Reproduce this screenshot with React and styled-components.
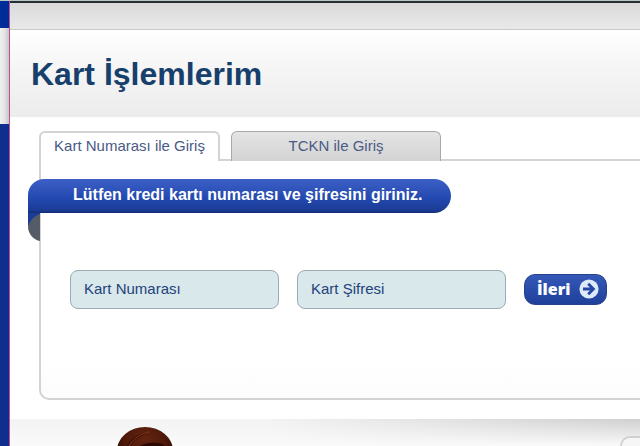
import React, { useState } from 'react';
import styled, { createGlobalStyle } from 'styled-components';

const colors = {
  Navy: '#173f6b',
  Text: '#4a5a86',
  Field: '#d9e8eb',
  Line: '#d3d3d3',
  Blue: '#102f8c',
};

const tabs = [
  { id: 'card', label: 'Kart Numarası ile Giriş', width: 181 },
  { id: 'tckn', label: 'TCKN ile Giriş', width: 210 },
];

const RibbonFold = () => (
  <Fold viewBox="0 0 12 28" aria-hidden="true">
    <path d="M0 0H12V3C6 4 2 8 0 15Z" fill="#1b3c95" />
    <path d="M12 1C6 3 1 8 0 15C1 22 6 27 12 28Z" fill="#565b68" />
  </Fold>
);

const ArrowIcon = () => (
  <svg width="20" height="20" viewBox="0 0 20 20" aria-hidden="true">
    <circle cx="10" cy="10" r="9.6" fill="#dceafa" />
    <path
      d="M4 10H14M9.2 4.8L14.4 10L9.2 15.2"
      fill="none"
      stroke="#2447a3"
      strokeWidth="2.8"
    />
  </svg>
);

const CoffeeBean = () => (
  <Bean viewBox="0 0 58 36" aria-hidden="true">
    <defs>
      <radialGradient id="bean" cx="0.5" cy="0.25" r="0.6">
        <stop offset="0" stopColor="#64240f" />
        <stop offset="0.6" stopColor="#4f190a" />
        <stop offset="1" stopColor="#2a0a05" />
      </radialGradient>
    </defs>
    <ellipse cx="29" cy="24" rx="28" ry="24" fill="url(#bean)" />
    <path d="M10 20C14 12 22 6 34 5C24 9 17 14 13 20Z" fill="#3a1007" />
    <path d="M13 19C17 12 24 7 33 5" fill="none" stroke="#86391f" />
    <path d="M24 19C30 15 38 15 47 17L50 22H22Z" fill="#2b0a05" />
  </Bean>
);

const App = () => {
  const [active, setActive] = useState('card');

  return (
    <>
      <GlobalStyle />
      <Page>
        <TopLine />
        <Columns>
          <Sidebar>
            <SidebarTop />
            <SidebarGap />
          </Sidebar>
          <Main>
            <TopBar />
            <Header>
              <Title>Kart İşlemlerim</Title>
            </Header>
            <Content>
              <Tabs role="tablist">
                {tabs.map(({ id, label, width }) => (
                  <Tab
                    key={id}
                    type="button"
                    role="tab"
                    aria-selected={active === id}
                    $active={active === id}
                    $width={width}
                    onClick={() => setActive(id)}
                  >
                    {label}
                  </Tab>
                ))}
              </Tabs>
              <Panel>
                <Ribbon>
                  Lütfen kredi kartı numarası ve şifresini giriniz.
                  <RibbonFold />
                </Ribbon>
                <Form onSubmit={evt => evt.preventDefault()}>
                  <Field
                    type="text"
                    placeholder="Kart Numarası"
                    aria-label="Kart Numarası"
                  />
                  <Field
                    type="password"
                    placeholder="Kart Şifresi"
                    aria-label="Kart Şifresi"
                  />
                  <Submit type="submit">
                    İleri
                    <ArrowIcon />
                  </Submit>
                </Form>
              </Panel>
            </Content>
            <Footer>
              <CoffeeBean />
              <FooterBox />
            </Footer>
          </Main>
        </Columns>
      </Page>
    </>
  );
};

export default App;

const GlobalStyle = createGlobalStyle`
  * {
    box-sizing: border-box;
  }

  body {
    margin: 0;
    background: #fff;
    font-family: 'Liberation Sans', Arial, sans-serif;
  }
`;

const Page = styled.div`
  display: flex;
  flex-direction: column;
  height: 100vh;
  overflow: hidden;
`;

const TopLine = styled.div`
  flex: none;
  height: 1px;
  background: #b9c6c8;
`;

const Columns = styled.div`
  display: flex;
  flex: 1;
  min-height: 0;
`;

const Sidebar = styled.aside`
  flex: none;
  width: 10px;
  border-right: 1px solid #b9509c;
  background: ${colors.Blue};
`;

const SidebarTop = styled.div`
  height: 27px;
  background: #002c98;
`;

const SidebarGap = styled.div`
  height: 96px;
  background: linear-gradient(90deg, #f0f0f0, #e4e4e4 50%, #c6c6c6);
`;

const Main = styled.main`
  display: flex;
  flex: 1;
  flex-direction: column;
  min-width: 0;
`;

const TopBar = styled.div`
  flex: none;
  height: 29px;
  border-top: 2px solid #26302f;
  border-bottom: 1px solid #c9c9c9;
  background: linear-gradient(#dadada, #e9e9e9);
`;

const Header = styled.header`
  flex: none;
  padding: 26px 21px 25px;
  background: linear-gradient(#fff, #f4f4f4 50%, #ececec);
`;

const Title = styled.h1`
  margin: 0;
  color: ${colors.Navy};
  font-size: 32px;
  line-height: 36px;
`;

const Content = styled.section`
  flex: none;
  padding: 14px 0 19px 29px;
`;

const Tabs = styled.div`
  position: relative;
  display: flex;
  gap: 11px;
  margin-bottom: -2px;
`;

const Tab = styled.button`
  width: ${({ $width }) => $width}px;
  height: 30px;
  padding: 0 0 ${({ $active }) => ($active ? 4 : 2)}px;
  border: ${({ $active }) =>
    $active ? `2px solid ${colors.Line}` : '1px solid #a9a9a9'};
  border-bottom: none;
  border-radius: 6px 6px 0 0;
  background: ${({ $active }) =>
    $active ? '#fff' : 'linear-gradient(#e4e4e4, #d3d3d3)'};
  color: ${colors.Text};
  font-family: inherit;
  font-size: 15px;
  cursor: pointer;
`;

const Panel = styled.div`
  padding: 18px 0 89px;
  border: 2px solid ${colors.Line};
  border-right: none;
  border-radius: 0 0 0 10px;
  background: linear-gradient(#fff 85%, #fcfcfc);
`;

const Ribbon = styled.div`
  position: relative;
  width: fit-content;
  margin-left: -13px;
  padding: 0 29px 2px 45px;
  border-radius: 16px 17px 17px 0;
  background: linear-gradient(#3c60c6, #2247ae 60%, #1b3c95 92%, #132c74);
  color: #fff;
  font-size: 16px;
  font-weight: bold;
  line-height: 32px;
  white-space: nowrap;
`;

const Fold = styled.svg`
  position: absolute;
  top: 100%;
  left: 0;
  width: 12px;
  height: 28px;
`;

const Form = styled.form`
  display: flex;
  align-items: center;
  gap: 18px;
  margin: 57px 0 0 29px;
`;

const Field = styled.input`
  width: 209px;
  height: 39px;
  padding: 0 13px 2px;
  border: 1px solid #9aabb2;
  border-radius: 8px;
  background: ${colors.Field};
  color: #23427a;
  font-family: inherit;
  font-size: 15px;

  &::placeholder {
    color: #23427a;
    opacity: 1;
  }
`;

const Submit = styled.button`
  display: flex;
  align-items: center;
  justify-content: space-between;
  width: 83px;
  height: 31px;
  padding: 0 7px 2px 12px;
  border: 1px solid #27418c;
  border-radius: 11px;
  background: linear-gradient(#3558b8, #1f409a);
  color: #fff;
  font-family: 'Open Sans', sans-serif;
  font-size: 16px;
  font-weight: 800;
  cursor: pointer;
`;

const Footer = styled.footer`
  position: relative;
  display: flex;
  flex: 1;
  align-items: flex-start;
  justify-content: space-between;
  padding-left: 106px;
  overflow: hidden;
  background: linear-gradient(transparent, #fafafa 27px),
    linear-gradient(90deg, #f3f3f3 40%, #cfcfcf);
`;

const Bean = styled.svg`
  flex: none;
  width: 58px;
  height: 36px;
  margin-top: 8px;
`;

const FooterBox = styled.div`
  width: 20px;
  height: 40px;
  margin-top: 17px;
  border: 2px solid #d0d0d0;
  border-right: none;
  border-radius: 10px 0 0 0;
  background: #f6f6f6;
`;
